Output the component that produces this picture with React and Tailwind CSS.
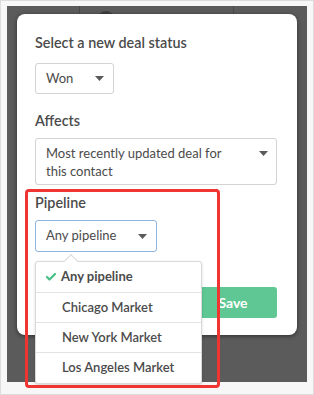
import { Check } from 'lucide-react';

function Caret() {
  return (
    <svg width="9" height="5" viewBox="0 0 9 5" className="shrink-0">
      <path d="M0 0 L9 0 L4.5 5 Z" fill="#5a5a5a" />
    </svg>
  );
}

const OPTIONS = ['Chicago Market', 'New York Market', 'Los Angeles Market'];

export default function App() {
  return (
    <div className="relative w-[314px] h-[395px] bg-[#f7f7f7] border border-[#dcdcdc] overflow-hidden" style={{ fontFamily: 'Lato, "Open Sans", sans-serif' }}>
      <div className="ml-[6px] mt-[5px] w-[300px] h-[376px] bg-[#5b5b5b] relative overflow-hidden">
        {/* blurred page behind */}
        <div className="absolute left-[72px] top-0 w-px h-[10px] bg-[#4a4a4a]" />
        <div className="absolute left-[226px] top-0 w-px h-[10px] bg-[#4a4a4a]" />
        <div className="absolute left-[90px] top-[5px] w-[18px] h-[18px] rounded-full bg-[#3f3f3f]" />

        {/* modal */}
        <div className="relative ml-[10px] mt-[8px] w-[280px] bg-white rounded-[8px] shadow-[0_1px_4px_rgba(0,0,0,0.5)] pl-[18px] pr-[20px] pt-[19px] pb-[17px] text-[#4b4b4b]">
          <div className="text-[14.4px] leading-[20px] font-semibold">Select a new deal status</div>
          <div className="mt-[10px] w-[79px] h-[31px] border border-[#d3d3d3] rounded-[3px] flex items-center justify-between pl-[10px] pr-[9px] text-[13px]">
            <span>Won</span>
            <Caret />
          </div>

          <div className="mt-[17px] text-[14.4px] leading-[20px] font-semibold">Affects</div>
          <div className="mt-[7px] w-[242px] h-[47px] border border-[#d3d3d3] rounded-[3px] flex justify-between pl-[10px] pr-[8px] pt-[5px] text-[13px] leading-[18px]">
            <span>Most recently updated deal for<br />this contact</span>
            <div className="mt-[7px]"><Caret /></div>
          </div>

          <div className="mt-[8px] text-[14.4px] leading-[20px] font-semibold">Pipeline</div>
          <div className="mt-[7px] w-[122px] h-[32px] border border-[#8eb2e2] rounded-[3px] flex items-center justify-between pl-[10px] pr-[9px] text-[13px]">
            <span>Any pipeline</span>
            <Caret />
          </div>

          <div className="mt-[35px] flex justify-end gap-2">
            <button className="w-[88px] h-[31px] rounded-[3px] bg-[#5ec793] text-white text-[14px] font-bold">Save</button>
          </div>
        </div>
      </div>

      {/* pipeline dropdown */}
      <div className="absolute left-[34px] top-[260px] w-[167px] bg-white border border-[#d9d9d9] rounded-[3px] shadow-[0_1px_3px_rgba(0,0,0,0.15)] text-[13px] text-[#4b4b4b] font-semibold">
        <div className="absolute left-[30px] top-[-6px] w-[10px] h-[10px] rotate-45 bg-white border-l border-t border-[#d9d9d9]" />
        <div className="relative h-[31px] flex items-center pl-[9px] gap-[4px] border-b border-[#e3e3e3]">
          <Check className="w-[12px] h-[12px] text-[#49bf88]" strokeWidth={4.5} />
          <span className="font-bold">Any pipeline</span>
        </div>
        {OPTIONS.map((o, i) => (
          <div key={o} className={`h-[30px] flex items-center pl-[26px] ${i < OPTIONS.length - 1 ? 'border-b border-[#e3e3e3]' : ''}`}>
            {o}
          </div>
        ))}
      </div>

      {/* annotation */}
      <div className="absolute left-[24px] top-[188px] w-[195px] h-[199px] border-[3px] border-[#ef3431] rounded-[4px] pointer-events-none" />
    </div>
  );
}
